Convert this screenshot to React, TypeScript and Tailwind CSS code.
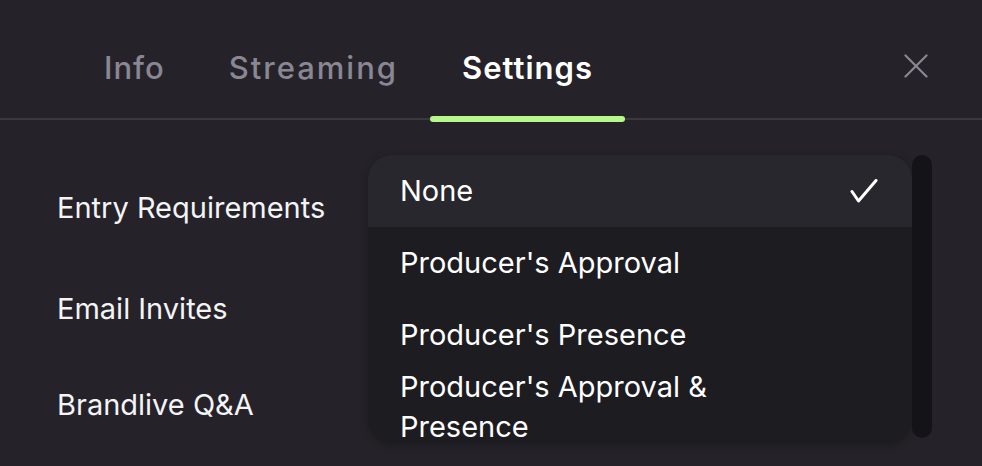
import React from "react";

const tabs = [
  { label: "Info", active: false, spacing: "tracking-[1px]" },
  { label: "Streaming", active: false, spacing: "tracking-[2px]" },
  { label: "Settings", active: true, spacing: "tracking-[1px]" },
];

const options = [
  { label: "None", selected: true },
  { label: "Producer's Approval", selected: false },
  { label: "Producer's Presence", selected: false },
  { label: "Producer's Approval & Presence", selected: false },
];

function CloseIcon() {
  return (
    <svg width="24" height="24" viewBox="0 0 24 24" fill="none" stroke="#8b8894" strokeWidth="2.2" strokeLinecap="round">
      <path d="M1.5 1.5L22.5 22.5" />
      <path d="M22.5 1.5L1.5 22.5" />
    </svg>
  );
}

function CheckIcon() {
  return (
    <svg width="28" height="24" viewBox="0 0 28 24" fill="none" stroke="#ffffff" strokeWidth="3" strokeLinecap="round" strokeLinejoin="round">
      <path d="M2 12.5L8.5 22L26 1.5" />
    </svg>
  );
}

export default function App() {
  return (
    <div className="w-[982px] h-[466px] overflow-hidden bg-[#252329] text-[#f4f4f6] font-['Inter','Noto_Sans',sans-serif] relative">
      {/* Tabs */}
      <div className="h-[120px] border-b-2 border-[#3a3940] flex items-stretch pl-[72px] pr-[54px]">
        <div className="flex">
          {tabs.map((t) => (
            <div key={t.label} className="relative flex flex-col justify-end px-8 pb-[30px]">
              <span
                className={
                  "text-[31px] leading-[40px] " +
                  t.spacing +
                  " " +
                  (t.active ? "font-semibold text-white" : "font-medium text-[#8a8794]")
                }
              >
                {t.label}
              </span>
              {t.active && (
                <div className="absolute left-0 right-0 -bottom-[4px] h-[6px] rounded-full bg-[#b6f98a]" />
              )}
            </div>
          ))}
        </div>
        <div className="ml-auto flex items-center pt-[14px]">
          <CloseIcon />
        </div>
      </div>

      {/* Setting rows */}
      <div className="pl-[57px] pt-[68px] flex flex-col text-[29px] leading-[40px]">
        <div className="h-[101px]">Entry Requirements</div>
        <div className="h-[96px]">Email Invites</div>
        <div className="h-[40px]">Brandlive Q&amp;A</div>
      </div>

      {/* Open dropdown */}
      <div className="absolute left-[368px] top-[155px] flex">
        <div className="w-[544px] h-[288px] rounded-[24px] overflow-hidden bg-[#1d1c21] shadow-[0_2px_8px_rgba(0,0,0,0.25)]">
          {options.map((o) => (
            <div
              key={o.label}
              className={
                "h-[72px] flex items-center justify-between pl-8 pr-[34px] " +
                (o.selected ? "bg-[#28272d]" : "")
              }
            >
              <span className="max-w-[400px] text-[29px] leading-[40px] text-white">{o.label}</span>
              {o.selected && <CheckIcon />}
            </div>
          ))}
        </div>
        <div className="w-[20px] h-[283px] rounded-full bg-[#141318]" />
      </div>
    </div>
  );
}
